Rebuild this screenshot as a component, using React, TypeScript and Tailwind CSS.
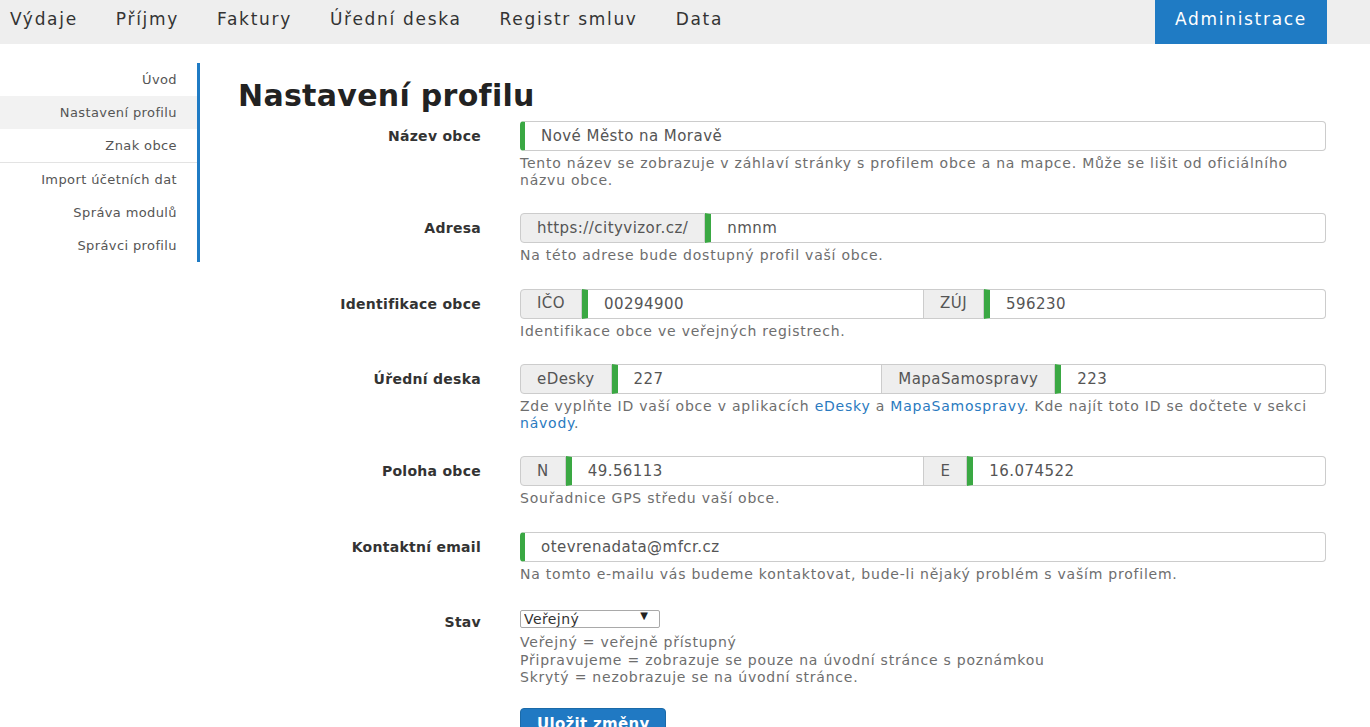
import React from "react";

const font = { fontFamily: '"DejaVu Sans", "Open Sans", sans-serif' };

const topLinks = ["Výdaje", "Příjmy", "Faktury", "Úřední deska", "Registr smluv", "Data"];

function TopBar() {
  return (
    <div className="flex h-[44px] bg-[#eeeeee] text-[17px] tracking-[0.1em] text-[#333]">
      <ul className="flex items-center gap-[38px] pb-[4px] pl-[10px]">
        {topLinks.map((l) => (
          <li key={l} className="whitespace-nowrap">
            {l}
          </li>
        ))}
      </ul>
      <div className="ml-auto mr-[43px] flex items-center bg-[#1f7bc4] px-[20px] pb-[4px] text-white">
        Administrace
      </div>
    </div>
  );
}

function SideItem({ label, active }: { label: string; active?: boolean }) {
  return (
    <li
      className={
        "flex h-[33px] items-center justify-end pr-[20px] text-[13px] tracking-[0.03em] text-[#555] " +
        (active ? "bg-[#f2f2f2]" : "")
      }
    >
      {label}
    </li>
  );
}

function Sidebar() {
  return (
    <div className="w-[200px] shrink-0 pt-[19px]">
      <ul className="border-r-[3px] border-[#1f7bc4]">
        <SideItem label="Úvod" />
        <SideItem label="Nastavení profilu" active />
        <SideItem label="Znak obce" />
        <li className="h-px bg-[#e3e3e3]" />
        <SideItem label="Import účetních dat" />
        <SideItem label="Správa modulů" />
        <SideItem label="Správci profilu" />
      </ul>
    </div>
  );
}

function Row({ label, children }: { label: string; children: React.ReactNode }) {
  return (
    <div className="mb-[25px] flex">
      <label className="w-[243px] shrink-0 text-right text-[14px] font-bold leading-[30px] tracking-[0.02em] text-[#333]">
        {label}
      </label>
      <div className="ml-[39px] min-w-0 flex-1">{children}</div>
    </div>
  );
}

function Help({ children }: { children: React.ReactNode }) {
  return (
    <p className="mt-[4px] text-[14px] leading-[16.5px] tracking-[0.055em] text-[#6e6e6e]">{children}</p>
  );
}

const addon =
  "flex shrink-0 items-center border border-[#cccccc] bg-[#eeeeee] px-[16px] text-[15px] tracking-[0.03em] text-[#555]";
const field =
  "h-full min-w-0 flex-1 border border-l-[6px] border-[#cccccc] border-l-[#3aa843] bg-white pl-[16px] text-[15px] tracking-[0.03em] text-[#555] outline-none";
const single =
  "h-[30px] w-full rounded-[4px] border border-l-[5px] border-[#cccccc] border-l-[#3aa843] pl-[16px] text-[15px] tracking-[0.03em] text-[#555] outline-none";

function Pair({ a, av, b, bv }: { a: string; av: string; b: string; bv: string }) {
  return (
    <div className="flex h-[30px]">
      <span className={addon + " rounded-l-[4px]"}>{a}</span>
      <input className={field} defaultValue={av} />
      <span className={addon + " border-l-0"}>{b}</span>
      <input className={field + " rounded-r-[4px]"} defaultValue={bv} />
    </div>
  );
}

export default function App() {
  return (
    <div className="min-h-screen bg-white" style={font}>
      <TopBar />
      <div className="flex">
        <Sidebar />
        <div className="min-w-0 flex-1 pl-[38px] pr-[44px] pt-[34px]">
          <h1 className="mb-[7px] text-[30px] font-bold leading-[36px] tracking-[0.01em] text-[#222]">
            Nastavení profilu
          </h1>

          <Row label="Název obce">
            <input className={single} defaultValue="Nové Město na Moravě" />
            <Help>
              Tento název se zobrazuje v záhlaví stránky s profilem obce a na mapce. Může se lišit od oficiálního
              názvu obce.
            </Help>
          </Row>

          <Row label="Adresa">
            <div className="flex h-[30px]">
              <span className={addon + " rounded-l-[4px]"}>https://cityvizor.cz/</span>
              <input className={field + " rounded-r-[4px]"} defaultValue="nmnm" />
            </div>
            <Help>Na této adrese bude dostupný profil vaší obce.</Help>
          </Row>

          <Row label="Identifikace obce">
            <Pair a="IČO" av="00294900" b="ZÚJ" bv="596230" />
            <Help>Identifikace obce ve veřejných registrech.</Help>
          </Row>

          <Row label="Úřední deska">
            <Pair a="eDesky" av="227" b="MapaSamospravy" bv="223" />
            <Help>
              Zde vyplňte ID vaší obce v aplikacích <a className="text-[#2a7ac0]">eDesky</a> a{" "}
              <a className="text-[#2a7ac0]">MapaSamospravy</a>. Kde najít toto ID se dočtete v sekci{" "}
              <a className="text-[#2a7ac0]">návody</a>.
            </Help>
          </Row>

          <Row label="Poloha obce">
            <Pair a="N" av="49.56113" b="E" bv="16.074522" />
            <Help>Souřadnice GPS středu vaší obce.</Help>
          </Row>

          <Row label="Kontaktní email">
            <input className={single} defaultValue="otevrenadata@mfcr.cz" />
            <Help>Na tomto e-mailu vás budeme kontaktovat, bude-li nějaký problém s vaším profilem.</Help>
          </Row>

          <Row label="Stav">
            <div className="relative w-[140px]">
              <select className="h-[18px] w-full appearance-none rounded-[2px] border border-[#a9a9a9] bg-white pl-[3px] text-[14px] leading-[16px] tracking-[0.03em] text-[#333] outline-none">
                <option>Veřejný</option>
                <option>Připravujeme</option>
                <option>Skrytý</option>
              </select>
              <span className="pointer-events-none absolute right-[12px] top-[2px] text-[10px] leading-[14px] text-[#222]">
                ▼
              </span>
            </div>
            <div className="mt-[3px] text-[14px] leading-[17.5px] tracking-[0.055em] text-[#6e6e6e]">
              <p>Veřejný = veřejně přístupný</p>
              <p>Připravujeme = zobrazuje se pouze na úvodní stránce s poznámkou</p>
              <p>Skrytý = nezobrazuje se na úvodní stránce.</p>
            </div>
            <button className="mt-[21px] h-[34px] rounded-[4px] border border-[#1b6aa8] bg-[#2079c3] px-[16px] text-[15px] font-bold tracking-[0.02em] text-white">
              Uložit změny
            </button>
          </Row>
        </div>
      </div>
    </div>
  );
}
